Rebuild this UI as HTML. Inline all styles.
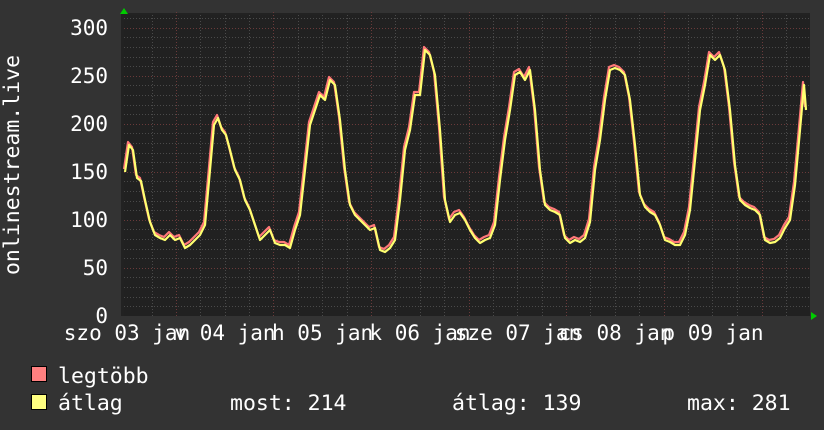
<!DOCTYPE html>
<html><head><meta charset="utf-8"><style>
html,body{margin:0;padding:0;background:#333;}
svg{display:block}
text{font-family:"DejaVu Sans Mono","Liberation Mono",monospace;fill:#fff;}
</style></head><body>
<svg width="824" height="430" viewBox="0 0 824 430" xmlns="http://www.w3.org/2000/svg">
<rect width="824" height="430" fill="#333"/>
<rect x="121" y="13" width="689" height="303" fill="#222"/>
<rect x="124" y="15" width="686" height="301" fill="#212121"/>
<g stroke="#4a4a4a" stroke-width="1" stroke-dasharray="1,2">
<path d="M124 18.5H810M124 37.5H810M124 47.5H810M124 57.5H810M124 66.5H810M124 85.5H810M124 95.5H810M124 105.5H810M124 114.5H810M124 133.5H810M124 143.5H810M124 153.5H810M124 162.5H810M124 181.5H810M124 191.5H810M124 201.5H810M124 210.5H810M124 229.5H810M124 239.5H810M124 249.5H810M124 258.5H810M124 277.5H810M124 287.5H810M124 297.5H810M124 306.5H810"/>
<path d="M152.5 15V316M200.5 15V316M225.5 15V316M249.5 15V316M298.5 15V316M322.5 15V316M347.5 15V316M395.5 15V316M420.5 15V316M444.5 15V316M493.5 15V316M517.5 15V316M542.5 15V316M590.5 15V316M615.5 15V316M639.5 15V316M688.5 15V316M712.5 15V316M737.5 15V316M786.5 15V316"/>
</g>
<g stroke="#6a3a3a" stroke-width="1" stroke-dasharray="1,2">
<path d="M124 28.5H810M124 76.5H810M124 124.5H810M124 172.5H810M124 220.5H810M124 268.5H810"/>
<path d="M176.5 12V316M273.5 12V316M371.5 12V316M469.5 12V316M566.5 15V316M664.5 12V316M762.5 12V316"/>
</g>
<polygon points="120,14 124,8 128,14" fill="#0c0"/>
<polygon points="811,312 817,316 811,320" fill="#0c0"/>
<g fill="none" stroke-width="2.2" stroke-linejoin="round">
<polyline stroke="#ff7878" transform="translate(-1,-3)" points="125,172 129,145 133,150 137,178 141,181 145,200 150,222 155,235 160,238 165,240 170,235 175,240 180,238 185,248 190,245 195,240 200,235 205,225 210,170 214,125 218,118 222,130 226,135 230,150 235,170 240,180 245,200 250,210 255,225 260,240 265,235 270,230 275,243 280,245 285,245 290,248 295,230 300,215 305,170 310,125 315,110 320,95 325,100 330,80 335,85 340,120 345,170 350,205 355,215 360,220 365,225 370,230 375,228 380,250 385,252 390,248 395,240 400,200 405,150 410,130 415,95 420,95 425,50 430,55 435,75 440,130 445,200 450,222 455,215 460,213 465,220 470,230 475,238 480,243 485,240 490,238 495,225 500,180 505,140 510,110 515,75 520,72 525,80 530,70 535,110 540,170 545,205 550,210 555,212 560,215 565,238 570,243 575,240 580,242 585,238 590,222 595,170 600,140 605,100 610,70 615,68 620,70 625,75 630,100 635,145 640,195 645,207 650,212 655,215 660,225 665,240 670,242 675,245 680,245 685,235 690,210 695,160 700,110 705,85 710,55 715,60 720,55 725,70 730,110 735,165 740,200 745,205 750,208 755,210 760,215 765,240 770,243 775,242 780,238 785,228 790,220 795,185 800,130 804,85 806,110"/>
<polyline stroke="#ffff70" points="125,172 129,145 133,150 137,178 141,181 145,200 150,222 155,235 160,238 165,240 170,235 175,240 180,238 185,248 190,245 195,240 200,235 205,225 210,170 214,125 218,118 222,130 226,135 230,150 235,170 240,180 245,200 250,210 255,225 260,240 265,235 270,230 275,243 280,245 285,245 290,248 295,230 300,215 305,170 310,125 315,110 320,95 325,100 330,80 335,85 340,120 345,170 350,205 355,215 360,220 365,225 370,230 375,228 380,250 385,252 390,248 395,240 400,200 405,150 410,130 415,95 420,95 425,50 430,55 435,75 440,130 445,200 450,222 455,215 460,213 465,220 470,230 475,238 480,243 485,240 490,238 495,225 500,180 505,140 510,110 515,75 520,72 525,80 530,70 535,110 540,170 545,205 550,210 555,212 560,215 565,238 570,243 575,240 580,242 585,238 590,222 595,170 600,140 605,100 610,70 615,68 620,70 625,75 630,100 635,145 640,195 645,207 650,212 655,215 660,225 665,240 670,242 675,245 680,245 685,235 690,210 695,160 700,110 705,85 710,55 715,60 720,55 725,70 730,110 735,165 740,200 745,205 750,208 755,210 760,215 765,240 770,243 775,242 780,238 785,228 790,220 795,185 800,130 804,85 806,110"/>
</g>
<g font-size="21" text-anchor="end">
<text x="108" y="35">300</text>
<text x="108" y="83">250</text>
<text x="108" y="131">200</text>
<text x="108" y="179">150</text>
<text x="108" y="227">100</text>
<text x="108" y="275">50</text>
<text x="108" y="323">0</text>
</g>
<text font-size="21.5" text-anchor="middle" transform="translate(19,165) rotate(-90)">onlinestream.live</text>
<g font-size="21" text-anchor="middle">
<text x="127" y="340">szo 03 jan</text>
<text x="225" y="340">v 04 jan</text>
<text x="322.6" y="340">h 05 jan</text>
<text x="420" y="340">k 06 jan</text>
<text x="518" y="340">sze 07 jan</text>
<text x="615.5" y="340">cs 08 jan</text>
<text x="713" y="340">p 09 jan</text>
</g>
<rect x="31.5" y="366.5" width="15" height="15" fill="#ff8080" stroke="#000"/>
<rect x="31.5" y="394.5" width="15" height="15" fill="#ffff80" stroke="#000"/>
<g font-size="21.5">
<text x="58" y="383">legtöbb</text>
<text x="58" y="410">átlag</text>
<text x="230" y="410">most: 214</text>
<text x="452" y="410">átlag: 139</text>
<text x="687" y="410">max: 281</text>
</g>
</svg>
</body></html>
